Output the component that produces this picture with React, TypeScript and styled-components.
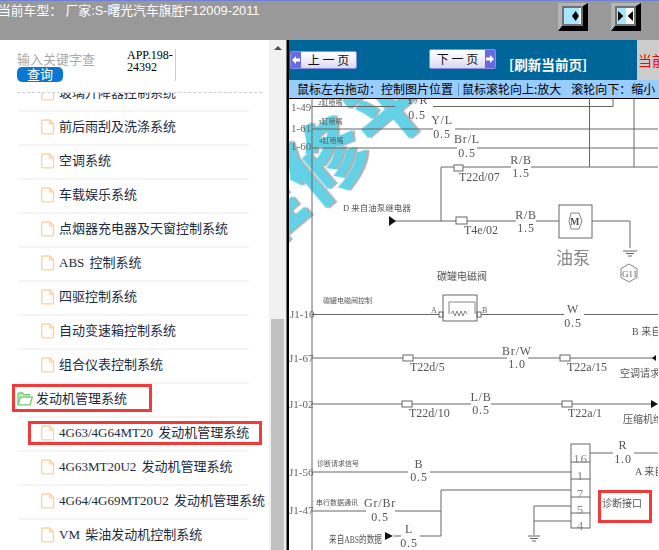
import React from "react"
import styled, {createGlobalStyle} from "styled-components";

const GlobalStyle = createGlobalStyle`
  html, body {
    margin: 0;
    padding: 0;
    height: 550px;
    overflow: hidden;
    background: #fff;
    font-family: "Liberation Sans", "Noto Sans CJK SC", sans-serif;
  }
`

const Page = styled.div`
  width: 659px;
  height: 550px;
  overflow: hidden;
  display: flex;
  flex-direction: column;
`

const Header = styled.header`
  flex: 0 0 40px;
  box-sizing: border-box;
  display: flex;
  align-items: flex-start;
  background: #999;
  border-top: 1px solid #6f80d8;
  color: #fff;
  font-size: 12.8px;
`

const CarModel = styled.div`
  flex: none;
  margin: 1px 0 0 -2px;
  line-height: 17px;
  width: 560px;
  white-space: pre;
`

const Tools = styled.div`
  display: flex;
  gap: 23px;
  margin-top: 2px;
  flex: none;
`

const ToolButton = styled.div`
  width: 30px;
  height: 28px;
  box-sizing: border-box;
  flex: none;
  border-style: solid;
  border-width: 3px 5px 5px 4px;
  border-color: #b4b4b4 #000 #000 #b4b4b4;
  background: #707070;
  padding: 2px;
  display: flex;

  svg {
    display: block;
    width: 100%;
    height: 100%;
  }
`

const Main = styled.div`
  flex: 1;
  display: flex;
  min-height: 0;
`

const Sidebar = styled.aside`
  flex: 0 0 287px;
  display: flex;
  background: #fff;
`

const SidebarBody = styled.div`
  flex: 0 0 269px;
  display: flex;
  flex-direction: column;
  min-width: 0;
`

const SearchBar = styled.div`
  flex: 0 0 53px;
  box-sizing: border-box;
  margin: 0 7px 0 17px;
  border-bottom: 1px dashed #ccc;
  display: flex;
  align-items: flex-start;
`

const SearchForm = styled.div`
  width: 78px;
  margin-top: 13px;
  display: flex;
  flex-direction: column;
`

const SearchInput = styled.input`
  width: 78px;
  height: 14px;
  padding: 0;
  border: 0;
  outline: 0;
  font: 13px/14px "Liberation Sans", "Noto Sans CJK SC", sans-serif;

  &::placeholder {
    color: #aaa;
    opacity: 1;
  }
`

const SearchButton = styled.button`
  width: 46px;
  height: 15px;
  padding: 0;
  border: 0;
  border-radius: 5px;
  background: #0a78d0;
  color: #fff;
  font: 13px/15px "Liberation Sans", "Noto Sans CJK SC", sans-serif;
`

const AppCode = styled.div`
  width: 48px;
  height: 32px;
  margin: 9px 0 0 32px;
  border-right: 1px solid #ccc;
  font: 12px/12px "Liberation Serif", serif;
  color: #000;
  word-break: break-word;
`

const TreeViewport = styled.div`
  flex: 1;
  overflow: hidden;
  position: relative;
`

const Tree = styled.ul`
  list-style: none;
  margin: -15px 0 0 17px;
  padding: 0;
  width: 232px;
`

const Row = styled.li<{$child?: boolean}>`
  position: relative;
  height: 34px;
  box-sizing: border-box;
  border-bottom: 2px solid #f5f5f5;
  padding: 0 0 2px ${p => p.$child ? 24 : 0}px;
  display: flex;
  align-items: center;
  gap: ${p => p.$child ? 4 : 3}px;
  white-space: nowrap;
  word-spacing: 2px;
  font: 13px/16px "Liberation Serif", "Noto Sans CJK SC", serif;
  color: #1c2b40;

  svg {
    flex: none;
  }
`

const Highlight = styled.span<{$left: number; $top: number; $w: number; $h: number}>`
  position: absolute;
  left: ${p => p.$left}px;
  top: ${p => p.$top}px;
  width: ${p => p.$w}px;
  height: ${p => p.$h}px;
  box-sizing: border-box;
  border: 3px solid #f33a3a;
`

const Scrollbar = styled.div`
  flex: 0 0 17px;
  background: #f1f1f1;
  display: flex;
  flex-direction: column;
  align-items: center;
  border-right: 1px solid #777;
`

const ScrollArrow = styled.div`
  margin-top: 6px;
  border-style: solid;
  border-width: 0 4px 4px;
  border-color: transparent transparent #505050;
`

const ScrollThumb = styled.div`
  margin-top: 269px;
  width: 13px;
  flex: 1;
  background: #c1c1c1;
`

const Viewer = styled.section`
  flex: 1;
  min-width: 0;
  border-left: 2px solid #000;
  display: flex;
  flex-direction: column;
`

const PagerBand = styled.div`
  flex: 0 0 40px;
  display: flex;
`

const Pager = styled.div`
  flex: 0 0 348px;
  background: #006699;
  display: flex;
  align-items: flex-start;
  padding-left: 1px;
  box-sizing: border-box;
`

const PageButton = styled.div<{$top: number; $gap: number; $next?: boolean}>`
  width: 67px;
  height: ${p => p.$next ? 20 : 18}px;
  box-sizing: border-box;
  margin: ${p => p.$top}px 0 0 ${p => p.$gap}px;
  border: 1px solid #8c8ce6;
  border-radius: 2px;
  background: linear-gradient(#fff, #f4f4ff 35%, #d9d9ef);
  display: flex;
  flex-direction: ${p => p.$next ? "row-reverse" : "row"};
  align-items: center;
  font: 12px/16px "Noto Sans CJK SC", sans-serif;
  color: #111;
`

const PageArrow = styled.span`
  flex: 0 0 10px;
  align-self: stretch;
  background: #6a6ae0;
  display: flex;
  align-items: center;
  justify-content: center;

  svg {
    display: block;
  }
`

const PageLabel = styled.span`
  flex: 1;
  text-align: center;
  white-space: pre;
`

const Refresh = styled.div`
  margin: 16px 0 0 13px;
  color: #fff;
  font: bold 13.6px/17px "Noto Sans CJK SC", sans-serif;
  white-space: nowrap;
`

const PagerSide = styled.div`
  flex: 1;
  background: #ccc;
  color: #f00;
  font: 14px/16px "Noto Sans CJK SC", sans-serif;
  padding: 12px 0 0 1px;
  white-space: nowrap;
  overflow: hidden;
`

const HintBar = styled.div`
  flex: 0 0 19px;
  box-sizing: border-box;
  background: #99ccff;
  border-bottom: 1px solid #000;
  padding-left: 8px;
  display: flex;
  align-items: center;
  color: #000;
  font: 12px/18px "Noto Sans CJK SC", sans-serif;
  white-space: pre;
`

const HintDivider = styled.span`
  width: 1px;
  height: 13px;
  margin: 0 3px 0 5px;
  background: #5a8fc8;
`

const HintPart = styled.span<{$gap?: number}>`
  margin-left: ${p => p.$gap || 0}px;
`

const Diagram = styled.svg`
  flex: 1;
  display: block;
  width: 369px;
  height: 451px;
  filter: blur(0.35px);
  background: #fff;
`

const Watermark = styled.text`
  font: 700 80px "Noto Sans CJK SC", sans-serif;
  fill: #63d2e6;
  stroke: #63d2e6;
  stroke-width: 1.5px;
  filter: drop-shadow(2px 2px 0 #a9b4b8);
`

const Wire = styled.text`
  font: 12px "Liberation Serif", serif;
  letter-spacing: 0.8px;
  fill: #555;
  text-anchor: middle;
`

const PortNumber = styled(Wire)`
  font-size: 13px;
  fill: #888;
`

const MotorMark = styled(Wire)`
  font-size: 10px;
  font-weight: 700;
`

const Pin = styled.text<{$size?: number}>`
  font: ${p => p.$size || 11}px "Liberation Serif", serif;
  fill: #666;
`

const Tag = styled.text`
  font: 12px "Liberation Serif", serif;
  fill: #555;
`

const Note = styled.text<{$size: number; $light?: boolean}>`
  font: ${p => p.$size}px "Liberation Serif", "Noto Sans CJK SC", serif;
  fill: ${p => p.$light ? "#888" : "#555"};
`

const NOTE_GRAY = "#666";

const treeItems: {name: string; folder?: boolean; mark?: [number, number, number, number]}[] = [
    {name: "玻璃升降器控制系统"},
    {name: "前后雨刮及洗涤系统"},
    {name: "空调系统"},
    {name: "车载娱乐系统"},
    {name: "点烟器充电器及天窗控制系统"},
    {name: "ABS 控制系统"},
    {name: "四驱控制系统"},
    {name: "自动变速箱控制系统"},
    {name: "组合仪表控制系统"},
    {name: "发动机管理系统", folder: true, mark: [-5, 0, 140, 28]},
    {name: "4G63/4G64MT20 发动机管理系统", mark: [11, 3, 234, 24]},
    {name: "4G63MT20U2 发动机管理系统"},
    {name: "4G64/4G69MT20U2 发动机管理系统"},
    {name: "VM 柴油发动机控制系统"},
]

const wires = [
    "M313 99V550",
    "M313 106.5H396M434 106.5H614V98",
    "M590.5 99V167M635 99V167",
    "M313 129H434M456 129H659",
    "M313 148H458M478 148H659",
    "M442 221V167H512M532 167H659",
    "M396 221H517M537 221H560M593 221H631V248",
    "M624 251H638M627 253.5H635M629 256H633",
    "M313 314.5H440M481 314.5H565M585 314.5H659",
    "M313 358H508M529 358H657",
    "M313 404H472M492 404H654",
    "M313 472H409M431 472H572",
    "M313 511H367M396 511H442",
    "M442 490H572M442 490V536H421M395 536H402",
    "M591 453H614M635 453H659",
    "M572 506H535V535M572 521H535",
    "M529 536H541M531 538.5H539M533 541H537",
]

const connectors = [
    [455, 165, 9, 6], [457, 217, 11, 7], [404, 355, 10, 6], [561, 355, 10, 6],
    [403, 401, 10, 6], [563, 401, 10, 6], [440, 312, 4, 5], [478, 312, 4, 5],
]

const wireLabels: [number, number, string][] = [
    [418, 104, "Y/R"], [418, 119, "0.5"], [443, 124, "Y/L"], [443, 138, "0.5"],
    [468, 143, "Br/L"], [468, 157, "0.5"], [522, 164, "R/B"], [522, 177, "1.5"],
    [527, 219, "R/B"], [527, 232, "1.5"], [574, 313, "W"], [574, 327, "0.5"],
    [518, 355, "Br/W"], [518, 368, "1.0"], [482, 401, "L/B"], [482, 414, "0.5"],
    [420, 468, "B"], [420, 481, "0.5"], [381, 507, "Gr/Br"], [381, 521, "0.5"],
    [410, 533, "L"], [410, 547, "0.5"], [624, 449, "R"], [624, 463, "1.0"],
]

const tags: [number, number, string][] = [
    [460, 181, "T22d/07"], [465, 234, "T4e/02"], [411, 371, "T22d/5"], [568, 371, "T22a/15"],
    [410, 417, "T22d/10"], [569, 417, "T22a/1"],
]

const pins: [number, number, string][] = [
    [292, 111, "1-49"], [292, 132, "1-61"], [292, 150, "1-60"], [291, 318, "J1-10"],
    [290, 362, "J1-67"], [290, 408, "J1-02"], [290, 476, "J1-56"], [290, 514, "J1-47"],
]

const notes: [number, number, number, string][] = [
    [319, 105, 7, "2缸喷嘴"], [319, 124, 7, "3缸喷嘴"], [320, 143, 7, "4缸喷嘴"],
    [344, 211, 8.5, "D 来自油泵继电器"], [438, 280, 10, "碳罐电磁阀"], [324, 303, 7, "碳罐电磁阀控制"],
    [633, 335, 10, "B 来自"], [621, 377, 10, "空调请求"], [624, 423, 10, "压缩机维"],
    [318, 466, 7, "诊断请求信号"], [317, 505, 7, "串行数据通讯"], [636, 475, 10, "A 来自"],
    [603, 507, 10, "诊断接口"],
]

const portRows: [number, string][] = [[458, "16"], [475, "1"], [493, "7"], [509, "5"], [525, "4"]]

const FileIcon = () => (
    <svg width="14" height="16" viewBox="0 0 14 16" fill="none" stroke="#fdd09b" strokeWidth="1.3">
        <path d="M1.7 1h7l3.8 3.8v9a1 1 0 0 1-1 1H1.7a1 1 0 0 1-1-1V2a1 1 0 0 1 1-1z"/>
        <path d="M8.7 1v3.8h3.8"/>
    </svg>
)

const FolderIcon = () => (
    <svg width="16" height="14" viewBox="0 0 16 14" fill="none" stroke="#6fcf6f" strokeWidth="1.3">
        <path d="M1 12.5V2a1 1 0 0 1 1-1h3.5l1.5 1.6h5.5v2" fill="#c9efc4"/>
        <path d="M1 12.8l2.5-7.6h11.8l-2.4 7.6z" fill="#fff"/>
    </svg>
)

export default function App() {
    return (
        <Page>
            <GlobalStyle/>
            <Header>
                <CarModel>当前车型： 厂家:S-曙光汽车旗胜F12009-2011</CarModel>
                <Tools>
                    <ToolButton>
                        <svg viewBox="0 0 16 16" preserveAspectRatio="none">
                            <rect width="16" height="16" fill="#a8e6ff"/>
                            <rect x="14.500" width="1.500" height="16" fill="#fff"/>
                            <path d="M7.500 8l3.500-5 3 5-3 5z" fill="#000"/>
                        </svg>
                    </ToolButton>
                    <ToolButton>
                        <svg viewBox="0 0 16 16" preserveAspectRatio="none">
                            <rect width="8" height="16" fill="#a8e6ff"/>
                            <rect x="8" width="8" height="16" fill="#fff"/>
                            <path d="M1 3l5 5-5 5zM15 3l-5 5 5 5z" fill="#000"/>
                        </svg>
                    </ToolButton>
                    <ToolButton/>
                </Tools>
            </Header>
            <Main>
                <Sidebar>
                    <SidebarBody>
                        <SearchBar>
                            <SearchForm>
                                <SearchInput placeholder="输入关键字查询"/>
                                <SearchButton>查询</SearchButton>
                            </SearchForm>
                            <AppCode>APP.198-24392</AppCode>
                        </SearchBar>
                        <TreeViewport>
                            <Tree>
                                {treeItems.map(item => (
                                    <Row key={item.name} $child={!item.folder}>
                                        {item.folder ? <FolderIcon/> : <FileIcon/>}
                                        {item.name}
                                        {item.mark && (
                                            <Highlight
                                                $left={item.mark[0]}
                                                $top={item.mark[1]}
                                                $w={item.mark[2]}
                                                $h={item.mark[3]}
                                            />
                                        )}
                                    </Row>
                                ))}
                            </Tree>
                        </TreeViewport>
                    </SidebarBody>
                    <Scrollbar>
                        <ScrollArrow/>
                        <ScrollThumb/>
                    </Scrollbar>
                </Sidebar>
                <Viewer>
                    <PagerBand>
                        <Pager>
                            <PageButton $top={11} $gap={0}>
                                <PageArrow>
                                    <svg width="8" height="8" viewBox="0 0 8 8"><path d="M0 4l4-4v2.500h4v3H4V8z" fill="#fff"/></svg>
                                </PageArrow>
                                <PageLabel>上 一 页</PageLabel>
                            </PageButton>
                            <PageButton $top={9} $gap={72} $next>
                                <PageArrow>
                                    <svg width="8" height="8" viewBox="0 0 8 8"><path d="M8 4L4 0v2.500H0v3h4V8z" fill="#fff"/></svg>
                                </PageArrow>
                                <PageLabel>下 一 页</PageLabel>
                            </PageButton>
                            <Refresh>[刷新当前页]</Refresh>
                        </Pager>
                        <PagerSide>当前</PagerSide>
                    </PagerBand>
                    <HintBar>
                        <HintPart>鼠标左右拖动：控制图片位置</HintPart>
                        <HintDivider/>
                        <HintPart>鼠标滚轮向上:放大</HintPart>
                        <HintPart $gap={10}>滚轮向下：缩小</HintPart>
                    </HintBar>
                    <Diagram viewBox="290 99 369 451">
                        <Watermark x="0" y="0" transform="translate(250 262) rotate(-40)" textLength="332">维修平台</Watermark>
                        <g fill="none" stroke={NOTE_GRAY} strokeWidth="1">
                            {wires.map(d => <path key={d} d={d}/>)}
                            {connectors.map(([x, y, w, h]) => (
                                <rect key={`${x}-${y}`} x={x} y={y} width={w} height={h} fill="#fff"/>
                            ))}
                            <rect x="560" y="205" width="33" height="33"/>
                            <path d="M570 221l2-8h8l3 8-3 8h-8z" strokeWidth="0.8"/>
                            <path d="M630 264l8 4.500v9l-8 4.500-8-4.500v-9z" strokeWidth="0.8"/>
                            <rect x="444" y="295" width="34" height="26"/>
                            <path d="M450 314v-12h26v12" strokeWidth="0.8"/>
                            <path d="M452 314l2-3 2 5 2-5 2 5 2-5 2 5 2-5 2 3" strokeWidth="0.8"/>
                            <rect x="572" y="444" width="19" height="84" fill="#fff"/>
                            <path d="M572 462H591M572 479H591M572 497H591M572 513H591"/>
                        </g>
                        <g fill="#111">
                            <path d="M390 216l7 5-7 5z"/>
                            <path d="M386 532l8 4-8 4z"/>
                            <path d="M653 358l4-3v6z"/>
                            <path d="M652 400l7 4-7 4z"/>
                        </g>
                        <MotorMark x="576" y="225">M</MotorMark>
                        <Pin x="623" y="277" $size={9}>G11</Pin>
                        <Pin x="432" y="313" $size={8}>A</Pin>
                        <Pin x="483" y="313" $size={8}>B</Pin>
                        {wireLabels.map(([x, y, text]) => <Wire key={`${x}-${y}`} x={x} y={y}>{text}</Wire>)}
                        {tags.map(([x, y, text]) => <Tag key={text} x={x} y={y}>{text}</Tag>)}
                        {pins.map(([x, y, text]) => <Pin key={text} x={x} y={y}>{text}</Pin>)}
                        {notes.map(([x, y, size, text]) => <Note key={text} x={x} y={y} $size={size}>{text}</Note>)}
                        <Note x="330" y="543" $size={10} textLength="53" lengthAdjust="spacingAndGlyphs">来自ABS的数据</Note>
                        <Note x="557" y="264" $size={17} $light>油泵</Note>
                        {portRows.map(([y, text]) => <PortNumber key={text} x="581.500" y={y + 5}>{text}</PortNumber>)}
                        <rect x="600.500" y="491.500" width="51" height="30" fill="none" stroke="#f33a3a" strokeWidth="3"/>
                    </Diagram>
                </Viewer>
            </Main>
        </Page>
    )
}
